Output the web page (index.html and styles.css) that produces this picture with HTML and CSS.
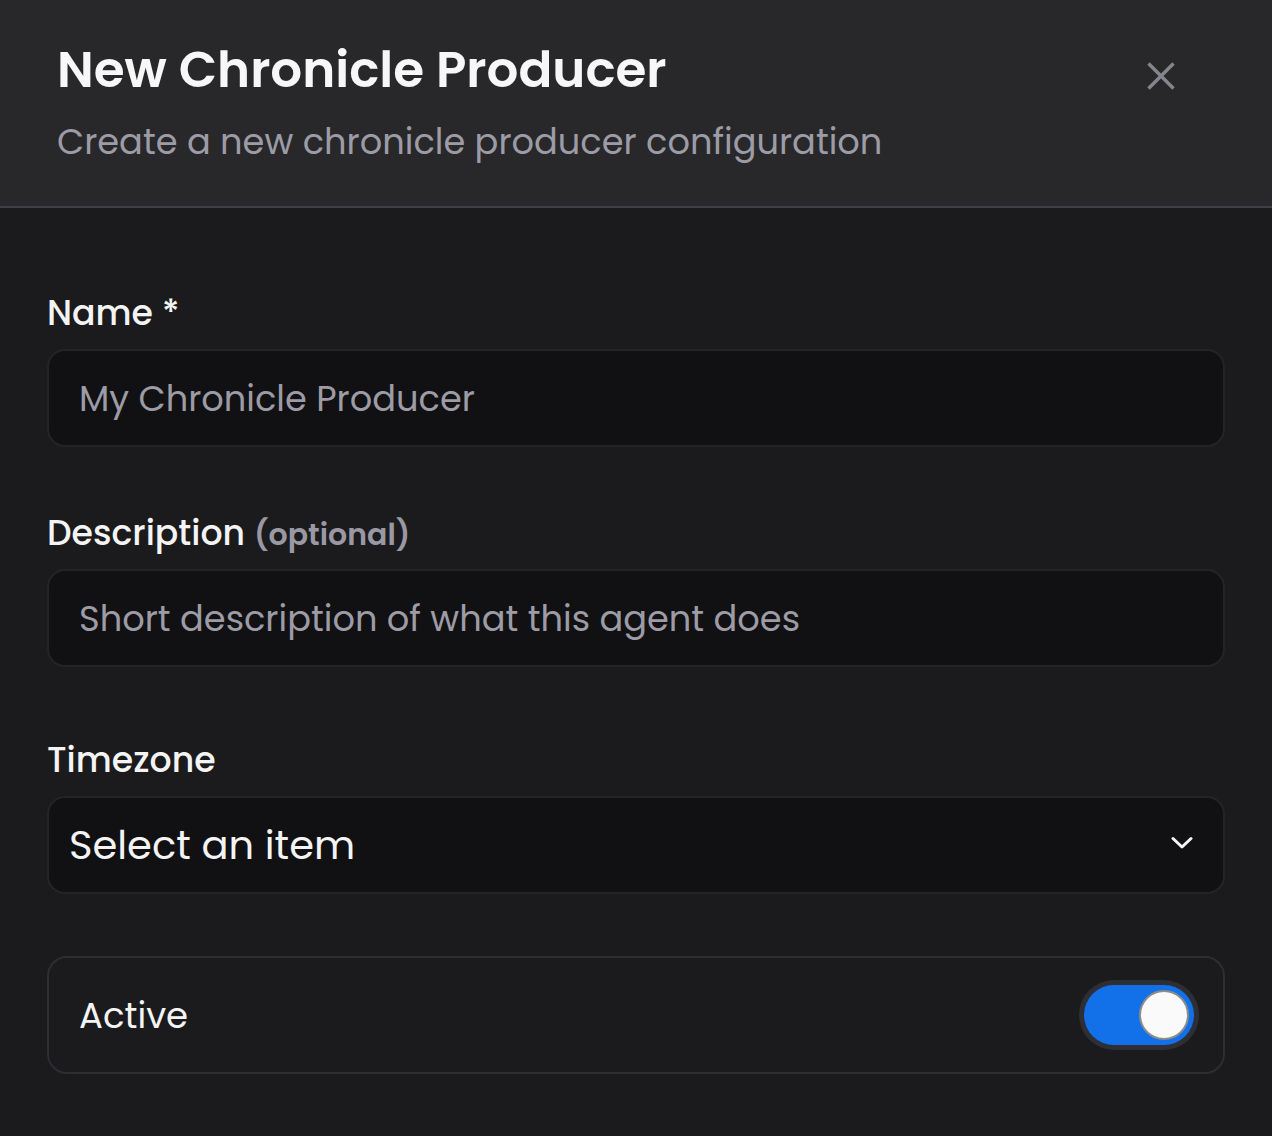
FILE: index.html
```html
<!DOCTYPE html>
<html lang="en">

<head>
  <meta charset="UTF-8">
  <meta name="viewport" content="width=device-width, initial-scale=1.0">
  <title>New Chronicle Producer</title>
  <link rel="stylesheet" href="styles.css">
</head>

<body>
  <div class="dialog">
    <!-- 标题栏 -->
    <div class="head">
      <div class="head-text">
        <h1 class="title">New Chronicle Producer</h1>
        <p class="subtitle">Create a new chronicle producer configuration</p>
      </div>
      <button class="close" aria-label="Close">
        <svg width="28" height="28" viewBox="0 0 28 28" fill="none" stroke="currentColor" stroke-width="3.4" stroke-linecap="butt">
          <path d="M1.5 1.5 L26.5 26.5 M26.5 1.5 L1.5 26.5" />
        </svg>
      </button>
    </div>

    <!-- 表单 -->
    <div class="form">
      <div class="field name-field">
        <label class="label">Name *</label>
        <div class="input"><span class="placeholder">My Chronicle Producer</span></div>
      </div>

      <div class="field desc-field">
        <label class="label">Description <span class="optional">(optional)</span></label>
        <div class="input"><span class="placeholder">Short description of what this agent does</span></div>
      </div>

      <div class="field tz-field">
        <label class="label">Timezone</label>
        <div class="input select">
          <span class="value">Select an item</span>
          <svg class="chevron" width="22" height="14" viewBox="0 0 22 14" fill="none" stroke="currentColor" stroke-width="3" stroke-linecap="round" stroke-linejoin="round">
            <path d="M2 2.5 L11 11 L20 2.5" />
          </svg>
        </div>
      </div>

      <div class="active-box">
        <span class="active-label">Active</span>
        <div class="toggle">
          <div class="track">
            <div class="knob"></div>
          </div>
        </div>
      </div>
    </div>
  </div>
</body>

</html>
```

FILE: styles.css
```css
* {
  margin: 0;
  padding: 0;
  box-sizing: border-box;
  font-family: "Poppins", "Inter", sans-serif;
}

body {
  background-color: #1b1b1e;
  min-height: 100vh;
  color: #f4f4f5;
}

.dialog {
  width: 1272px;
  min-height: 1136px;
  background-color: #1b1b1e;
}

/* 标题栏 */
.head {
  display: flex;
  justify-content: space-between;
  align-items: flex-start;
  background-color: #28282b;
  border-bottom: 2px solid #3f3f46;
  height: 208px;
  padding: 38px 89px 0 57px;
}

.title {
  font-size: 50px;
  line-height: 64px;
  font-weight: 600;
  color: #f7f7f8;
}

.subtitle {
  margin-top: 16px;
  font-size: 35.2px;
  line-height: 48px;
  color: #9d9ca6;
}

.close {
  width: 44px;
  height: 44px;
  margin-top: 16px;
  border: none;
  background: none;
  color: #85858e;
  display: flex;
  align-items: center;
  justify-content: center;
}

/* 表单 */
.form {
  padding: 81px 47px 0 47px;
}

.field {
  display: flex;
  flex-direction: column;
  gap: 12px;
}

.desc-field {
  margin-top: 62px;
}

.tz-field {
  margin-top: 69px;
}

.label {
  font-size: 34.7px;
  line-height: 48px;
  height: 48px;
  font-weight: 500;
  color: #f4f4f5;
}

.optional {
  font-size: 30px;
  line-height: 1;
  font-weight: 600;
  color: #9a99a3;
}

.input {
  height: 98px;
  border: 2px solid #242427;
  border-radius: 18px;
  background-color: #111113;
  display: flex;
  align-items: center;
  padding: 0 30px;
}

.placeholder {
  font-size: 35.2px;
  color: #9d9ca6;
}

.select {
  padding: 0 30px 0 20px;
  justify-content: space-between;
}

.select .value {
  font-size: 40px;
  color: #f4f4f5;
}

.chevron {
  color: #f4f4f5;
  margin-top: -4px;
}

.active-box {
  margin-top: 62px;
  height: 118px;
  border: 2px solid #2d2d32;
  border-radius: 20px;
  display: flex;
  align-items: center;
  justify-content: space-between;
  padding: 0 24px 0 30px;
}

.active-label {
  font-size: 35.5px;
  color: #f4f4f5;
}

.toggle {
  width: 120px;
  height: 70px;
  border-radius: 35px;
  background-color: #2e2e35;
  padding: 5px;
}

.track {
  width: 100%;
  height: 100%;
  border-radius: 30px;
  background-color: #1270e8;
  display: flex;
  align-items: center;
  justify-content: flex-end;
  padding-right: 5px;
}

.knob {
  width: 50px;
  height: 50px;
  border-radius: 50%;
  background-color: #fafafa;
  border: 2px solid #8c8c8c;
}
```
